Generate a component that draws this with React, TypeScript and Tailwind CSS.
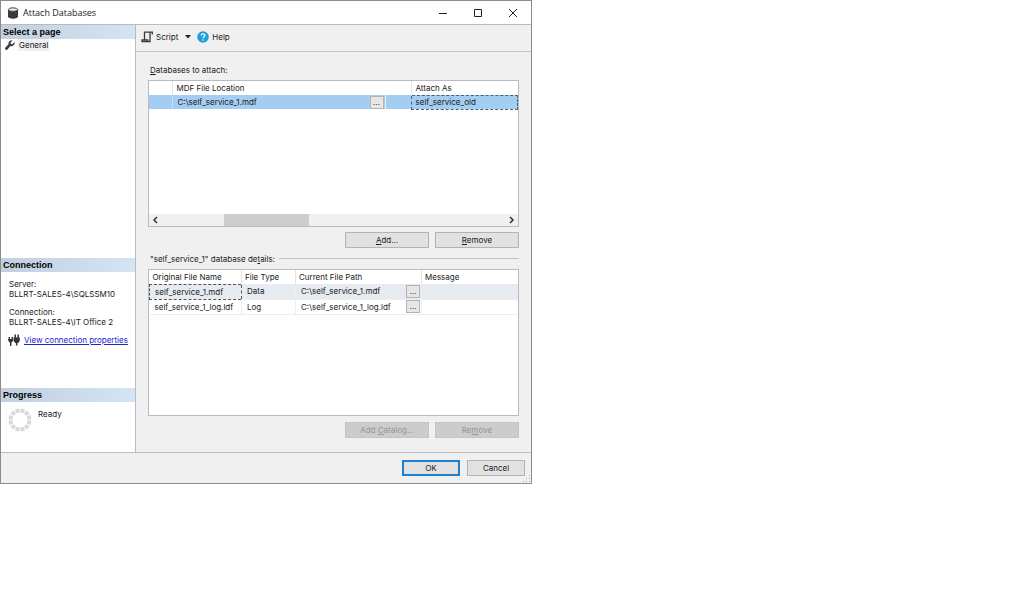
import type { ButtonHTMLAttributes, ReactNode } from 'react';
import clsx from 'clsx';

interface DialogButtonProps extends ButtonHTMLAttributes<HTMLButtonElement> {
    primary?: boolean;
}

interface FileRow {
    name: string;
    type: string;
    path: string;
}

const files: FileRow[] = [
    { name: 'self_service_1.mdf', type: 'Data', path: 'C:\\self_service_1.mdf' },
    { name: 'self_service_1_log.ldf', type: 'Log', path: 'C:\\self_service_1_log.ldf' },
];

const spokes = Array.from({ length: 12 }, (_, i) => i * 30);

const DatabaseIcon = () => (
    <svg viewBox="0 0 12 12" className="size-3" aria-hidden="true">
        <path d="M1 2.6v7C1 12.4 11 12.4 11 9.6v-7z" fill="#3a3a3a" />
        <ellipse cx="6" cy="2.6" rx="4.7" ry="1.8" fill="#e8e8e8" stroke="#3a3a3a" strokeWidth="0.9" />
    </svg>
);

const WrenchIcon = () => (
    <svg viewBox="0 0 24 24" className="size-[10px]" fill="#3c3c3c" aria-hidden="true">
        <path d="M23 6.5a7.500 7.500 0 0 1-10 8L6 22.500a3.200 3.200 0 0 1-5-4.500L8.500 10a7.500 7.500 0 0 1 9.500-9l-4.500 4.500.5 4 4 .5L22.500 5z" />
    </svg>
);

const ScriptIcon = () => (
    <svg viewBox="0 0 12 12" className="size-3" fill="none" stroke="#3a3a3a" strokeWidth="1.3" aria-hidden="true">
        <path d="M11.300 3.500V1.200H3.500V8.800M9 1.200v9.300H1V8.800h5.700v1.700" />
    </svg>
);

const HelpIcon = () => (
    <svg viewBox="0 0 12 12" className="size-3" aria-hidden="true">
        <circle cx="6" cy="6" r="5.8" fill="#1e9fd8" />
        <path d="M4.200 4.600C4.200 2.300 7.900 2.300 7.900 4.500 7.900 5.800 6.100 5.800 6.100 7.300" fill="none" stroke="#fff" strokeWidth="1.3" />
        <circle cx="6.1" cy="9" r="0.8" fill="#fff" />
    </svg>
);

const PlugIcon = () => (
    <svg viewBox="0 0 12 12" className="size-3 shrink-0" fill="none" stroke="#333" aria-hidden="true">
        <path d="M1.200 3v3M4.200 3v3M2.700 7v5" strokeWidth="1.4" />
        <path d="M.3 5h4.800v1.800L3.700 8.500h-2L.3 6.800z" fill="#333" stroke="none" />
        <path d="M7.200 .5v4M10.200 .5v4M8.700 7v4.500" strokeWidth="1.5" />
        <path d="M5.600 3.500h6.200v3.300L10.200 9h-3L5.600 6.800z" fill="#333" stroke="none" />
    </svg>
);

const ProgressRing = () => (
    <svg viewBox="0 0 24 24" className="size-6 shrink-0" aria-hidden="true">
        {spokes.map((angle) => (
            <rect key={angle} x="10" y="0.5" width="4" height="4" fill="#d9d9d9" transform={`rotate(${angle + 15} 12 12)`} />
        ))}
    </svg>
);

const SectionTitle = ({ children }: { children: ReactNode }) => (
    <h2 className="h-[14px] bg-linear-to-r from-[#c1cfdf] to-[#d5e4f4] px-0.5 font-['Liberation_Sans',sans-serif] text-[9px] leading-[14px] font-bold text-black">
        {children}
    </h2>
);

const DialogButton = ({ primary, className, ...props }: DialogButtonProps) => (
    <button
        type="button"
        className={clsx(
            'h-4 bg-[#e1e1e1] text-center',
            'disabled:border-[#c4c4c4] disabled:bg-[#cccccc] disabled:text-[#949494]',
            primary ? 'border-2 border-[#1b80d0] leading-3' : 'border border-[#b3b3b3] leading-[14px]',
            className,
        )}
        {...props}
    />
);

const BrowseButton = ({ label }: { label: string }) => (
    <button type="button" aria-label={label} className="block h-[13px] w-[14px] border border-[#b3b3b3] bg-[#e6e6e6] text-center leading-[11px]">
        ...
    </button>
);

const Sidebar = () => (
    <aside className="flex w-[135px] shrink-0 flex-col border-r border-[#b8bac4] bg-white">
        <section className="min-h-[233px] flex-1">
            <SectionTitle>Select a page</SectionTitle>
            <button type="button" className="flex h-3 items-center gap-[3px] pl-1">
                <WrenchIcon />
                <span className="bg-[#f0f0f0] px-px">General</span>
            </button>
        </section>
        <section className="h-[130px]">
            <SectionTitle>Connection</SectionTitle>
            <dl className="px-2 pt-[7px] leading-[10px]">
                <dt>Server:</dt>
                <dd>BLLRT-SALES-4\SQLSSM10</dd>
                <dt className="pt-2">Connection:</dt>
                <dd>BLLRT-SALES-4\IT Office 2</dd>
            </dl>
            <div className="flex items-center gap-1 pt-[7px] pl-[7px]">
                <PlugIcon />
                <a href="#properties" className="text-[#2222cc] underline">View connection properties</a>
            </div>
        </section>
        <section className="h-16">
            <SectionTitle>Progress</SectionTitle>
            <div className="flex gap-1.5 px-[7px] pt-1.5">
                <ProgressRing />
                <p>Ready</p>
            </div>
        </section>
    </aside>
);

const AttachTable = () => (
    <div className="flex h-[147px] flex-col justify-between border border-[#b8bac4] bg-white">
        <table aria-labelledby="attach-label" className="w-full table-fixed border-collapse text-left">
            <colgroup>
                <col className="w-[23px]" />
                <col className="w-[213px]" />
                <col className="w-[26px]" />
                <col />
            </colgroup>
            <thead>
                <tr className="h-[14px]">
                    <th className="border-r border-[#e5e5e5]" />
                    <th className="pl-1 font-normal">MDF File Location</th>
                    <th className="border-r border-[#e5e5e5]" />
                    <th className="pl-1 font-normal">Attach As</th>
                </tr>
            </thead>
            <tbody>
                <tr className="h-[14px] bg-[#a3cef1]">
                    <td className="border-r border-[#c5dff5]" />
                    <td className="border-r border-[#e4f0fb] pr-px pl-[5px]">
                        <div className="flex items-center justify-between">
                            C:\self_service_1.mdf
                            <BrowseButton label="Browse for MDF file" />
                        </div>
                    </td>
                    <td />
                    <td className="border border-dashed border-[#4c6070] pl-1">self_service_old</td>
                </tr>
            </tbody>
        </table>
        <div className="flex h-3 items-center justify-between bg-[#f0f0f0] px-[3px]">
            <svg viewBox="0 0 6 8" className="h-2 w-1.5" fill="none" stroke="#333" strokeWidth="1.5" aria-hidden="true">
                <path d="M5 1 2 4l3 3" />
            </svg>
            <div className="flex h-full flex-1 px-1">
                <div className="ml-[18%] w-1/4 bg-[#cdcdcd]" />
            </div>
            <svg viewBox="0 0 6 8" className="h-2 w-1.5" fill="none" stroke="#333" strokeWidth="1.5" aria-hidden="true">
                <path d="m1 1 3 3-3 3" />
            </svg>
        </div>
    </div>
);

const DetailsTable = () => (
    <div className="h-[147px] border border-[#b8bac4] bg-white">
        <table aria-labelledby="details-label" className="w-full table-fixed border-collapse text-left">
            <colgroup>
                <col className="w-[92px]" />
                <col className="w-[54px]" />
                <col className="w-[126px]" />
                <col />
            </colgroup>
            <thead>
                <tr className="h-[14px] [&>th]:border-l [&>th]:border-[#e5e5e5] [&>th]:pl-[3px] [&>th]:font-normal [&>th:first-child]:border-l-0">
                    <th>Original File Name</th>
                    <th>File Type</th>
                    <th>Current File Path</th>
                    <th>Message</th>
                </tr>
            </thead>
            <tbody>
                {files.map((file, index) => (
                    <tr key={file.name} className={clsx('h-[15px]', index === 0 && 'bg-[#e6eaf1]')}>
                        <td className={clsx('pl-[5px]', index === 0 ? 'border border-dashed border-[#555555]' : 'border-r border-b border-[#eeeeee]')}>
                            {file.name}
                        </td>
                        <td className="border-r border-b border-[#eeeeee] pl-[5px]">{file.type}</td>
                        <td className="border-r border-b border-[#eeeeee] pr-px pl-[5px]">
                            <div className="flex items-center justify-between">
                                {file.path}
                                <BrowseButton label={`Browse for ${file.name}`} />
                            </div>
                        </td>
                        <td className="border-b border-[#eeeeee]" />
                    </tr>
                ))}
            </tbody>
        </table>
    </div>
);

export default function App() {
    return (
        <div className="min-h-screen bg-white font-['Inter','Liberation_Sans',sans-serif] text-[8px] leading-3 text-[#1a1a1a]">
            <div role="dialog" aria-labelledby="dialog-title" className="w-full max-w-[532px] border border-[#8c8c8c] bg-[#f0f0f0]">
                <header className="flex h-6 items-center justify-between border-b border-[#b8bac4] bg-white pr-2 pl-1.5">
                    <div className="flex items-center gap-1">
                        <DatabaseIcon />
                        <h1 id="dialog-title" className="font-['Open_Sans',sans-serif] text-[9px]">Attach Databases</h1>
                    </div>
                    <div className="flex gap-[15px] [&_svg]:size-[10px] [&_svg]:fill-none [&_svg]:stroke-[#222222] [&>button]:flex [&>button]:size-5 [&>button]:items-center [&>button]:justify-center">
                        <button type="button" aria-label="Minimize"><svg viewBox="0 0 10 10"><path d="M1 5.500h8" /></svg></button>
                        <button type="button" aria-label="Maximize"><svg viewBox="0 0 10 10"><path d="M1.500 1.500h7v7h-7z" /></svg></button>
                        <button type="button" aria-label="Close"><svg viewBox="0 0 10 10"><path d="m1 1 8 8M9 1 1 9" /></svg></button>
                    </div>
                </header>

                <div className="flex border-b border-[#b8bac4]">
                    <Sidebar />
                    <main className="min-w-0 flex-1">
                        <div className="flex h-[27px] items-center border-b border-[#c6c6c6] px-[5px] pb-0.5">
                            <button type="button" className="flex items-center gap-[3px]">
                                <ScriptIcon />
                                Script
                                <svg viewBox="0 0 6 4" className="ml-1 h-1 w-1.5" aria-hidden="true"><path d="M0 0h6L3 3.500z" fill="#222" /></svg>
                            </button>
                            <button type="button" className="ml-1.5 flex items-center gap-[3px]">
                                <HelpIcon />
                                Help
                            </button>
                        </div>

                        <div className="px-3 pt-3">
                            <p id="attach-label" className="h-4 px-0.5"><u>D</u>atabases to attach:</p>
                            <AttachTable />
                            <div className="flex justify-end gap-1.5 pt-[5px]">
                                <DialogButton className="w-[84px]"><u>A</u>dd...</DialogButton>
                                <DialogButton className="w-[84px]"><u>R</u>emove</DialogButton>
                            </div>
                            <div className="flex h-[21px] items-center gap-1 pl-0.5">
                                <p id="details-label">"self_service_1" database de<u>t</u>ails:</p>
                                <div className="flex-1 border-t border-[#c2c2c2]" />
                            </div>
                            <DetailsTable />
                            <div className="flex justify-end gap-1.5 pt-1.5 pb-3">
                                <DialogButton disabled className="w-[84px]">Add <u>C</u>atalog...</DialogButton>
                                <DialogButton disabled className="w-[84px]">Re<u>m</u>ove</DialogButton>
                            </div>
                        </div>
                    </main>
                </div>

                <footer className="relative flex h-[30px] items-center justify-end gap-[7px] px-1.5">
                    <DialogButton primary className="w-[58px]">OK</DialogButton>
                    <DialogButton className="w-[58px]">Cancel</DialogButton>
                    <svg viewBox="0 0 8 8" className="absolute right-0 bottom-0 size-2" fill="#b5b5b5" aria-hidden="true">
                        <path d="M6 0h1v1H6zM6 3h1v1H6zM6 6h1v1H6zM3 3h1v1H3zM3 6h1v1H3zM0 6h1v1H0z" />
                    </svg>
                </footer>
            </div>
        </div>
    );
}
